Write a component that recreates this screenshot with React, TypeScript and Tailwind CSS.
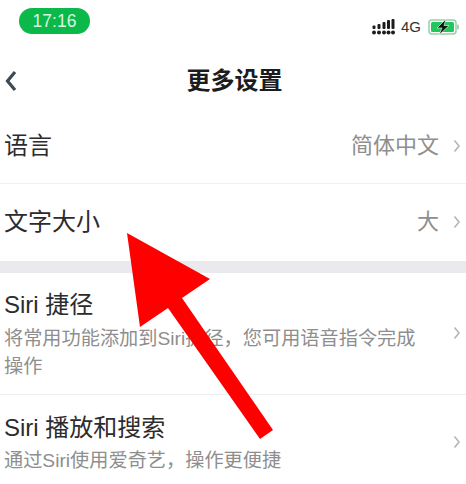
const font = { fontFamily: '"Liberation Sans", "Noto Sans CJK SC", sans-serif' };

function Chevron() {
  return (
    <svg width="8" height="16" viewBox="0 0 8 16" fill="none" className="shrink-0">
      <path d="M1.5 2.5 L6 8 L1.5 13.5" stroke="#b5b5b8" strokeWidth="1.6" />
    </svg>
  );
}

function Row({ label, value, h }: { label: string; value: string; h: string }) {
  return (
    <div className={`flex items-center justify-between pl-[4px] pr-[5px] ${h}`}>
      <span className="text-[24px] leading-[32px] text-[#2c2c2e]">{label}</span>
      <span className="flex items-center gap-[14px]">
        <span className="text-[22px] leading-[32px] text-[#8e8e8e]">{value}</span>
        <Chevron />
      </span>
    </div>
  );
}

function SubRow({ title, children, h, top, gap, chev }: { title: string; children: React.ReactNode; h: string; top: string; gap: string; chev: string }) {
  return (
    <div className={`flex items-start justify-between pl-[4px] pr-[5px] ${h}`}>
      <div className={`w-[416px] ${top}`}>
        <div className="text-[24px] leading-[32px] text-[#2c2c2e]">{title}</div>
        <div className={`text-[19.2px] leading-[28px] text-[#8e8e8e] ${gap}`}>{children}</div>
      </div>
      <div className={chev}>
        <Chevron />
      </div>
    </div>
  );
}

export default function App() {
  return (
    <div className="relative w-[466px] h-[484px] overflow-hidden bg-white" style={font}>
      <div className="flex items-start justify-between h-[58px] pl-[19px] pr-[6px] pt-[8px]">
        <div className="flex h-[26px] w-[71px] items-center justify-center rounded-full bg-[#0bb84a] text-[17.5px] text-[#d8f5e0]">
          17:16
        </div>
        <div className="flex items-center gap-[6px] pt-[10px]">
          <svg width="23" height="16" viewBox="0 0 23 16" fill="#1c1c1e">
            <circle cx="2" cy="13.5" r="2" /><circle cx="7" cy="13.5" r="2" /><circle cx="12" cy="13.5" r="2" /><circle cx="16.5" cy="13.5" r="2" /><circle cx="21" cy="13.5" r="2" />
            <rect x="0.5" y="6.5" width="3" height="3.5" rx="1" /><rect x="5.5" y="5" width="3" height="5" rx="1" /><rect x="10.5" y="3" width="3" height="7" rx="1" /><rect x="15" y="1" width="3" height="9" rx="1" /><rect x="19.5" y="0" width="3" height="10" rx="1" />
          </svg>
          <span className="text-[15px] leading-[18px] text-[#333]">4G</span>
          <svg width="32" height="16" viewBox="0 0 32 16" className="ml-[1px]">
            <rect x="1" y="1" width="27" height="14" rx="3" fill="none" stroke="#8fd6a0" strokeWidth="1.5" />
            <rect x="3" y="3" width="23" height="10" rx="1.5" fill="#22c55e" />
            <rect x="29" y="5.5" width="2" height="5" rx="1" fill="#c0c0c0" />
            <path d="M18 0 L9 9 H14 L11 16 L21 6.5 H16 Z" fill="#111" stroke="#fff" strokeWidth="0.6" />
          </svg>
        </div>
      </div>

      <div className="relative flex h-[46px] items-center justify-center pb-[1px] pl-[3px]">
        <svg width="14" height="24" viewBox="0 0 14 24" fill="none" className="absolute left-[4px] top-[11px]">
          <path d="M11 3 L3.5 12 L11 21" stroke="#3f4a52" strokeWidth="3.2" />
        </svg>
        <span className="text-[24px] font-bold leading-[32px] text-[#1c1c1e]">更多设置</span>
      </div>

      <Row label="语言" value="简体中文" h="h-[80px] pt-[5px] border-b border-[#efeff1]" />
      <Row label="文字大小" value="大" h="h-[77px] pb-[2px]" />
      <div className="h-[12px] bg-[#e9e9ee]" />

      <SubRow title="Siri 捷径" h="h-[122px] border-b border-[#efeff1]" top="pt-[16px]" gap="mt-[4px]" chev="pt-[52px]">
        将常用功能添加到Siri捷径，您可用语音指令完成操作
      </SubRow>
      <SubRow title="Siri 播放和搜索" h="h-[89px]" top="pt-[17px]" gap="mt-[3px]" chev="pt-[39px]">
        通过Siri使用爱奇艺，操作更便捷
      </SubRow>

      <svg width="466" height="484" viewBox="0 0 466 484" className="absolute inset-0">
        <polygon points="127,233 210,279 182,298 273,430 260,439 168,308 140,327" fill="#ff0000" />
      </svg>
    </div>
  );
}
